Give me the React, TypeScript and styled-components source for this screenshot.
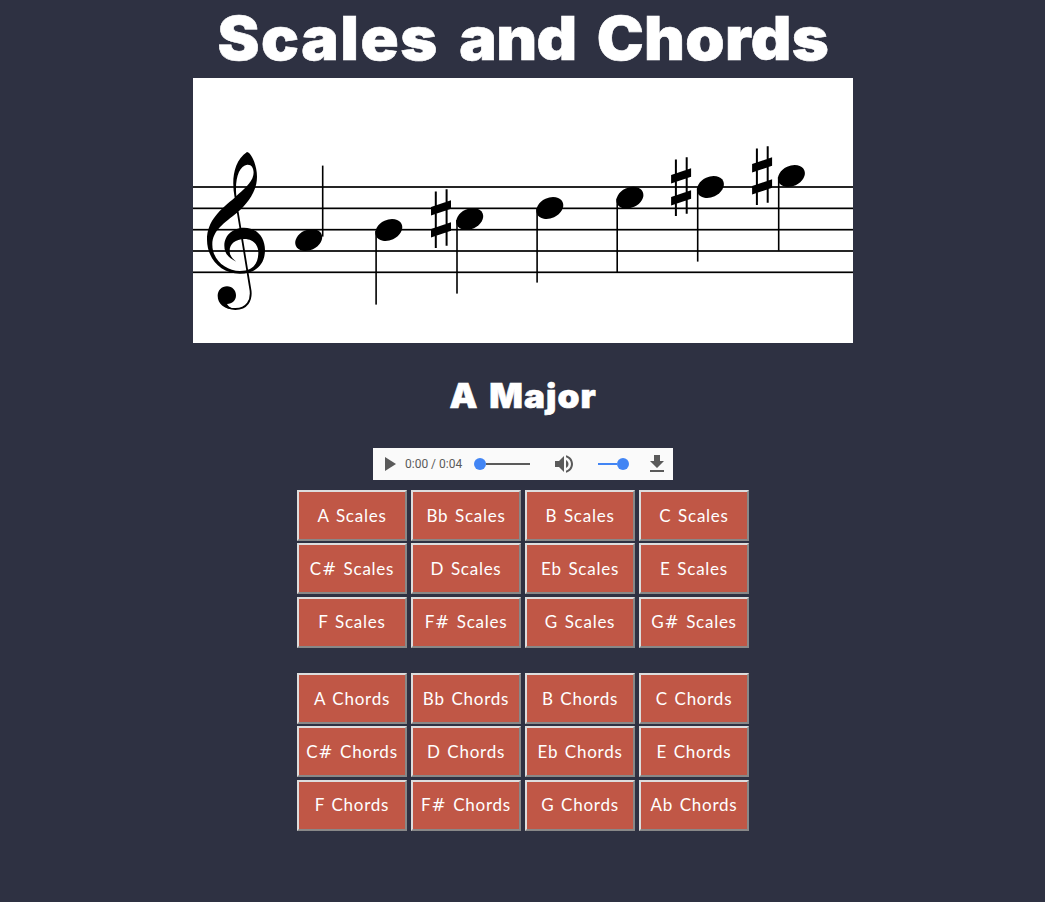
import React from "react";
import styled, { createGlobalStyle } from "styled-components";

const GlobalStyle = createGlobalStyle`
  body {
    margin: 0;
    background: #2e3142;
    color: #fff;
  }
`;

const Page = styled.main`
  display: flex;
  flex-direction: column;
  align-items: center;
  height: 902px;
  overflow: hidden;
`;

const Title = styled.h1`
  margin: 0;
  height: 78px;
  padding-left: 1px;
  font: 900 60px/76px Inter, "Liberation Sans", sans-serif;
  -webkit-text-stroke: 0.6px #fff;
  word-spacing: 7.3px;
  white-space: nowrap;
  transform: scaleX(1.05);
`;

const Word = styled.span<{ $tracking: number }>`
  letter-spacing: ${(p) => p.$tracking}px;
`;

const Staff = styled.svg`
  display: block;
  width: 660px;
  height: 265px;
  background: #fff;
`;

const ScaleName = styled.h2`
  margin: 0;
  height: 105px;
  font: 900 33.5px/107px Inter, "Liberation Sans", sans-serif;
  -webkit-text-stroke: 0.6px #fff;
  word-spacing: 4px;
  padding-left: 2px;
  white-space: nowrap;
  transform: scaleX(1.05);
`;

const Player = styled.div`
  display: flex;
  align-items: center;
  box-sizing: border-box;
  width: 300px;
  height: 32px;
  padding: 0 4px;
  background: #fafafa;
  color: #5a5a5a;
`;

const Glyph = styled.svg`
  flex: none;
  width: 24px;
  height: 24px;
  fill: #5a5a5a;
`;

const Time = styled.span`
  width: 57.5px;
  margin: 0 11px 0 4.5px;
  font: 12px/32px Roboto, sans-serif;
  white-space: nowrap;
`;

const Range = styled.div<{ $width: number; $end?: boolean }>`
  display: flex;
  align-items: center;
  flex-direction: ${(p) => (p.$end ? "row-reverse" : "row")};
  width: ${(p) => p.$width}px;
  margin-right: ${(p) => (p.$end ? 16 : 22)}px;
`;

const Track = styled.div<{ $color: string }>`
  flex: 1;
  height: 2px;
  background: ${(p) => p.$color};
`;

const Thumb = styled.div`
  width: 12px;
  height: 12px;
  border-radius: 50%;
  background: #4285f4;
`;

const Volume = styled(Glyph)`
  margin-right: 22px;
`;

const ButtonGrid = styled.div<{ $top: number }>`
  display: grid;
  grid-template-columns: repeat(4, 110px);
  grid-auto-rows: 51px;
  gap: 2.333px 4px;
  margin-top: ${(p) => p.$top}px;
`;

const Key = styled.button`
  box-sizing: border-box;
  padding: 0 0 0 1px;
  border: 2px solid;
  border-color: #ddd #888 #888 #ddd;
  background: #c05746;
  color: #fff;
  font: 17px/47px Lato, "Open Sans", sans-serif;
  letter-spacing: 0.75px;
  word-spacing: 1.6px;
  white-space: nowrap;

  &:nth-child(n + 9) {
    padding-bottom: 2px;
    line-height: 45px;
  }
`;

const Sharp = styled.span`
  font-family: "DejaVu Sans", sans-serif;
  font-size: 17px;
  line-height: 1;
`;

const scaleKeys = ["A", "Bb", "B", "C", "C#", "D", "Eb", "E", "F", "F#", "G", "G#"];
const chordKeys = ["A", "Bb", "B", "C", "C#", "D", "Eb", "E", "F", "F#", "G", "Ab"];

const KeyButton = ({ name, kind }: { name: string; kind: string }) => (
  <Key>
    {name.replace("#", "")}
    {name.endsWith("#") && <Sharp>#</Sharp>} {kind}
  </Key>
);

const notes = [
  { x: 308.7, y: 240, up: true },
  { x: 388.8, y: 230 },
  { x: 469.7, y: 219, sharp: -24 },
  { x: 549.8, y: 208 },
  { x: 629.9, y: 197.7 },
  { x: 710.4, y: 187, sharp: -24.6 },
  { x: 791.4, y: 176, sharp: -24.6 },
];

const Note = ({ x, y, up, sharp }: { x: number; y: number; up?: boolean; sharp?: number }) => (
  <g transform={`translate(${x} ${y})`}>
    <ellipse rx="14.1" ry="10.1" transform="rotate(-25)" />
    {up ? (
      <rect x="13.2" y="-74.4" width="1.6" height="71" />
    ) : (
      <rect x="-13.5" y="1" width="1.6" height="73.6" />
    )}
    {sharp !== undefined && (
      <path
        transform={`translate(${sharp} 0)`}
        d="M-10.9-27.4h2v56.4h-2zM-.1-29.7h2v56.4h-2zM-14.7-12l20-6.7v8.5l-20 6.7zM-14.7 10l20-6.7v8.5l-20 6.7z"
      />
    )}
  </g>
);

const Clef = () => (
  <g transform="translate(190 130) scale(.33333)">
    <path
      fillRule="evenodd"
      d="M171 66C185 68 201 108 201 140C201 185 173 219 143 247C102 280 67 302 67 344C67 390 108 423 150 423C188 423 205 401 205 367C205 344 189 327 163 327C137 327 119 342 119 362C119 378 128 387 139 395C117 385 103 371 103 347C103 313 132 293 162 293C201 293 225 322 225 360C225 405 195 431 150 431C91 431 51 384 51 329C51 271 92 238 134 203C124 151 130 94 171 66ZM139 198C134 145 147 108 172 104C187 103 193 119 190 135C185 161 158 180 139 198Z"
    />
    <path
      d="M143 245L180 472C189 514 168 537 136 537C119 537 108 532 99 522"
      fill="none"
      stroke="#000"
      strokeWidth="5.5"
    />
    <path d="M111 469C127 469 138 481 138 496C138 512 127 522 111 522C116 531 124 536 135 537C105 539 83 523 83 497C83 481 95 469 111 469Z" />
  </g>
);

export default function App() {
  return (
    <>
      <GlobalStyle />
      <Page>
        <Title>
          <Word $tracking={1.5}>Scales</Word> <Word $tracking={-0.6}>and</Word>{" "}
          <Word $tracking={0.3}>Chords</Word>
        </Title>
        <Staff viewBox="193 78 660 265">
          {[187, 208.35, 229.7, 251, 272.3].map((y) => (
            <rect key={y} x="193" y={y - 0.85} width="660" height="1.7" />
          ))}
          <Clef />
          {notes.map((n) => (
            <Note key={n.x} {...n} />
          ))}
        </Staff>
        <ScaleName>
          <Word $tracking={0.5}>A</Word> <Word $tracking={1}>Major</Word>
        </ScaleName>
        <Player>
          <Glyph viewBox="0 0 24 24">
            <path d="M8 5v14l11-7z" />
          </Glyph>
          <Time>0:00 / 0:04</Time>
          <Range $width={56}>
            <Thumb />
            <Track $color="#5a5a5a" />
          </Range>
          <Volume viewBox="0 0 24 24">
            <path d="M3 9v6h4l5 5V4L7 9H3zm13.5 3c0-1.77-1.02-3.29-2.5-4.03v8.05c1.48-.73 2.5-2.25 2.5-4.02zM14 3.23v2.06c2.89.86 5 3.54 5 6.71s-2.11 5.85-5 6.71v2.06c4.01-.91 7-4.49 7-8.77s-2.99-7.86-7-8.77z" />
          </Volume>
          <Range $width={31} $end>
            <Thumb />
            <Track $color="#4285f4" />
          </Range>
          <Glyph viewBox="0 0 24 24">
            <path d="M19 9h-4V3H9v6H5l7 7 7-7zM5 18v2h14v-2H5z" />
          </Glyph>
        </Player>
        <ButtonGrid $top={10}>
          {scaleKeys.map((k) => (
            <KeyButton key={k} name={k} kind="Scales" />
          ))}
        </ButtonGrid>
        <ButtonGrid $top={25.333}>
          {chordKeys.map((k) => (
            <KeyButton key={k} name={k} kind="Chords" />
          ))}
        </ButtonGrid>
      </Page>
    </>
  );
}
